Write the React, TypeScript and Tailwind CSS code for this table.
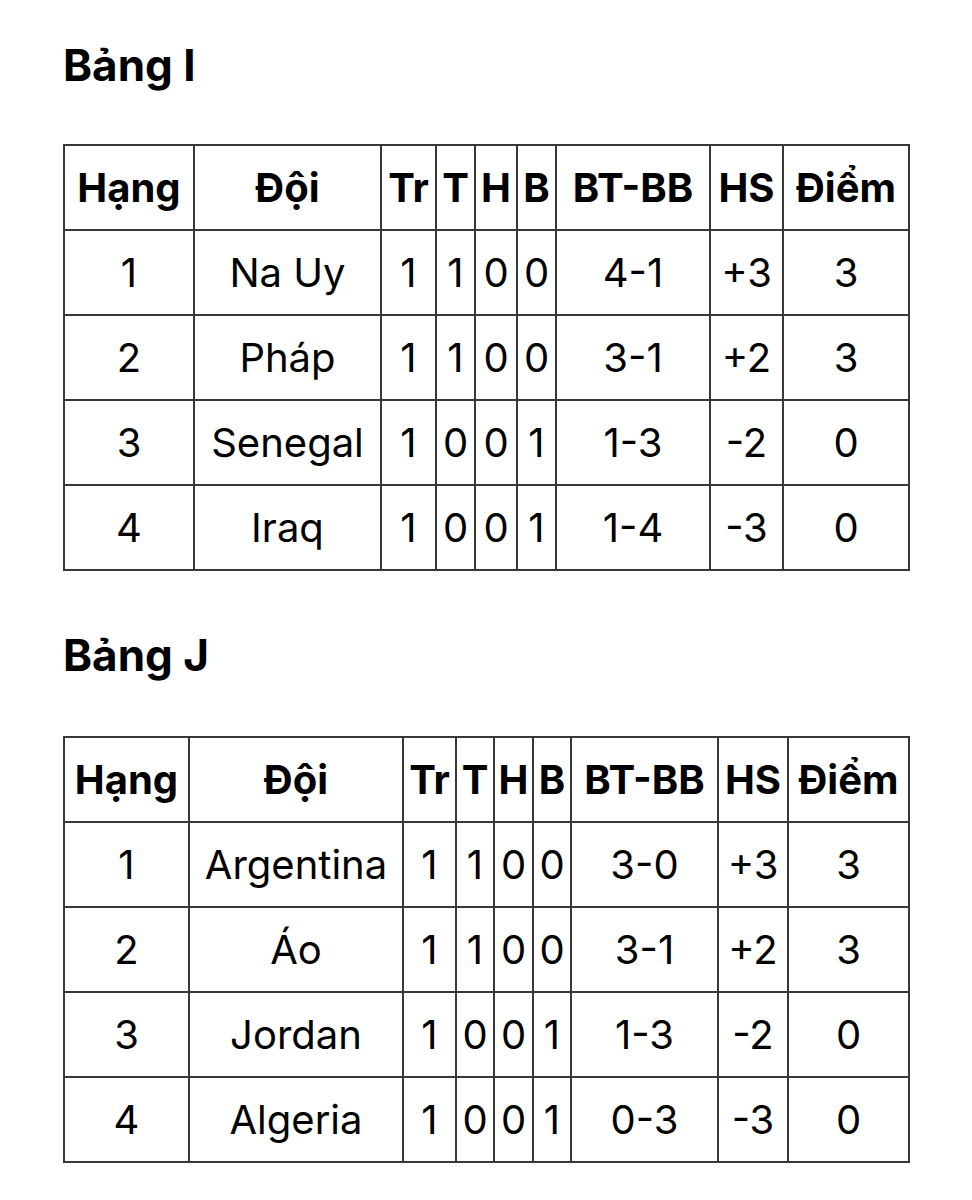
import React from "react";

type Row = { rank: number; team: string; tr: number; t: number; h: number; b: number; goals: string; hs: string; pts: number };

const groupI: Row[] = [
  { rank: 1, team: "Na Uy", tr: 1, t: 1, h: 0, b: 0, goals: "4-1", hs: "+3", pts: 3 },
  { rank: 2, team: "Pháp", tr: 1, t: 1, h: 0, b: 0, goals: "3-1", hs: "+2", pts: 3 },
  { rank: 3, team: "Senegal", tr: 1, t: 0, h: 0, b: 1, goals: "1-3", hs: "-2", pts: 0 },
  { rank: 4, team: "Iraq", tr: 1, t: 0, h: 0, b: 1, goals: "1-4", hs: "-3", pts: 0 },
];

const groupJ: Row[] = [
  { rank: 1, team: "Argentina", tr: 1, t: 1, h: 0, b: 0, goals: "3-0", hs: "+3", pts: 3 },
  { rank: 2, team: "Áo", tr: 1, t: 1, h: 0, b: 0, goals: "3-1", hs: "+2", pts: 3 },
  { rank: 3, team: "Jordan", tr: 1, t: 0, h: 0, b: 1, goals: "1-3", hs: "-2", pts: 0 },
  { rank: 4, team: "Algeria", tr: 1, t: 0, h: 0, b: 1, goals: "0-3", hs: "-3", pts: 0 },
];

const headers = ["Hạng", "Đội", "Tr", "T", "H", "B", "BT-BB", "HS", "Điểm"];

const cell = "border-[2.5px] border-[#383838] text-center px-0.5 h-[85px]";

function Standings({ title, rows, widths, titleClass }: { title: string; rows: Row[]; widths: string[]; titleClass: string }) {
  return (
    <section>
      <h2 className={titleClass}>{title}</h2>
      <table className="table-fixed border-collapse w-[845px]">
        <colgroup>
          {widths.map((w, i) => (
            <col key={i} className={w} />
          ))}
        </colgroup>
        <thead>
          <tr>
            {headers.map((h) => (
              <th key={h} className={`${cell} font-bold`}>{h}</th>
            ))}
          </tr>
        </thead>
        <tbody>
          {rows.map((r) => (
            <tr key={r.rank}>
              <td className={cell}>{r.rank}</td>
              <td className={cell}>{r.team}</td>
              <td className={cell}>{r.tr}</td>
              <td className={cell}>{r.t}</td>
              <td className={cell}>{r.h}</td>
              <td className={cell}>{r.b}</td>
              <td className={cell}>{r.goals}</td>
              <td className={cell}>{r.hs}</td>
              <td className={cell}>{r.pts}</td>
            </tr>
          ))}
        </tbody>
      </table>
    </section>
  );
}

export default function App() {
  return (
    <div className="min-h-[1200px] bg-white text-black pl-[63px] pt-[38px] text-[40px] leading-tight font-['Inter',sans-serif]">
      <Standings
        title="Bảng I"
        rows={groupI}
        titleClass="text-[44px] font-bold h-[106px]"
        widths={["w-[130px]", "w-[187px]", "w-[55px]", "w-[39px]", "w-[42px]", "w-[39px]", "w-[154px]", "w-[73px]", "w-[126px]"]}
      />
      <Standings
        title="Bảng J"
        rows={groupJ}
        titleClass="text-[44px] font-bold pt-[57px] h-[165px]"
        widths={["w-[125px]", "w-[214px]", "w-[53px]", "w-[38px]", "w-[39px]", "w-[38px]", "w-[147px]", "w-[70px]", "w-[121px]"]}
      />
    </div>
  );
}
